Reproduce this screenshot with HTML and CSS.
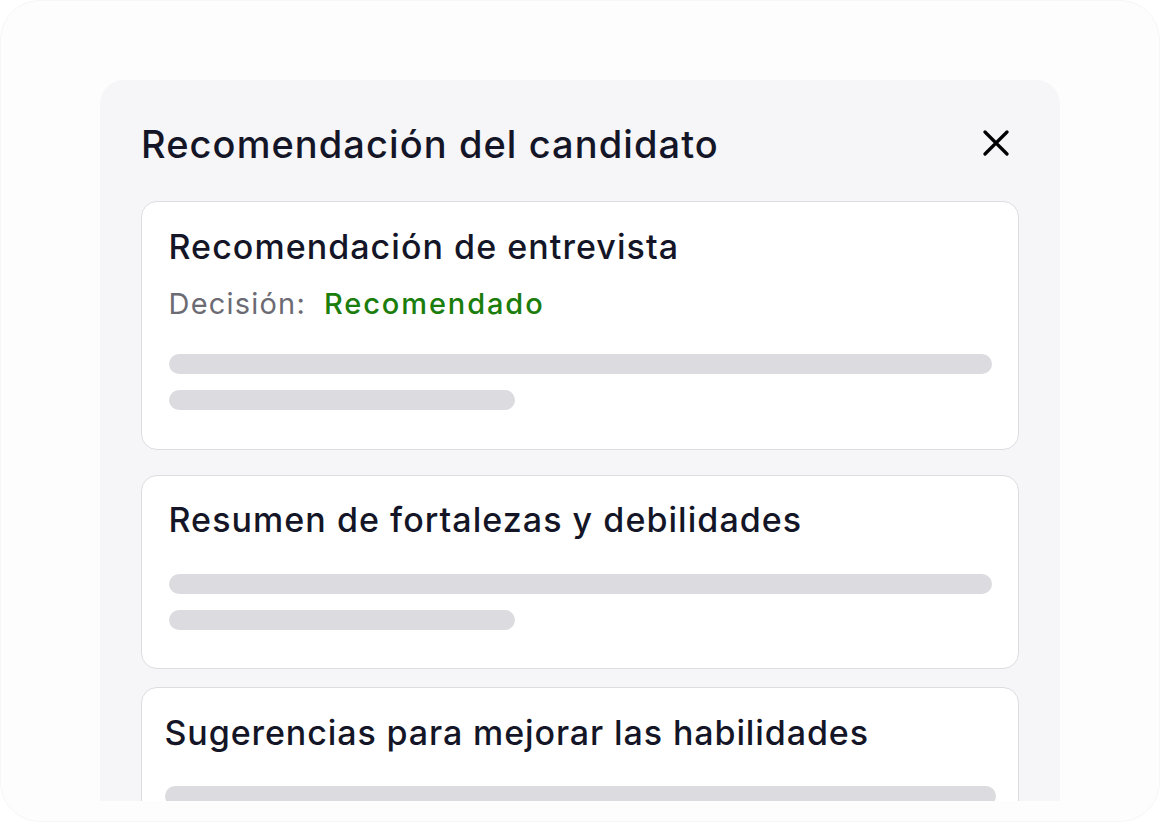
FILE: index.html
```html
<!DOCTYPE html>
<html lang="es">
<head>
<meta charset="utf-8">
<title>Recomendación del candidato</title>
<link rel="stylesheet" href="styles.css">
</head>
<body>
<div class="frame">
  <section class="panel">
    <header class="panel-header">
      <h1 class="panel-title">Recomendación del candidato</h1>
      <button class="close" aria-label="Cerrar">
        <svg width="26" height="26" viewBox="0 0 26 26" fill="none" stroke="#000" stroke-width="3.2" stroke-linecap="round">
          <path d="M2 2L24 24M24 2L2 24"/>
        </svg>
      </button>
    </header>
    <div class="cards">
      <article class="card card-first">
        <h2 class="card-title">Recomendación de entrevista</h2>
        <p class="decision"><span class="decision-label">Decisión:</span><span class="decision-value">Recomendado</span></p>
        <div class="bars">
          <div class="bar bar-full"></div>
          <div class="bar bar-short"></div>
        </div>
      </article>
      <article class="card card-second">
        <h2 class="card-title">Resumen de fortalezas y debilidades</h2>
        <div class="bars">
          <div class="bar bar-full"></div>
          <div class="bar bar-short"></div>
        </div>
      </article>
      <article class="card card-third">
        <h2 class="card-title">Sugerencias para mejorar las habilidades</h2>
        <div class="bars">
          <div class="bar bar-full"></div>
          <div class="bar bar-short"></div>
        </div>
      </article>
    </div>
  </section>
</div>
</body>
</html>
```

FILE: styles.css
```css
* { box-sizing: border-box; }
html, body {
  margin: 0;
  padding: 0;
  background: #ffffff;
  font-family: Inter, "Noto Sans", sans-serif;
}
.frame {
  width: 1160px;
  height: 822px;
  border: 1px solid #f6f6f8;
  border-radius: 40px;
  padding: 79px 99px 0 99px;
  overflow: hidden;
  background: #fdfdfe;
}
.panel {
  width: 960px;
  height: 721px;
  background: #f6f5f8;
  border-radius: 24px 24px 0 0;
  padding: 45px 41px 0 41px;
  overflow: hidden;
}
.panel-header {
  display: flex;
  align-items: flex-start;
  justify-content: space-between;
}
.panel-title {
  margin: 0;
  font-size: 38px;
  line-height: 38px;
  font-weight: 500;
  color: #141627;
  letter-spacing: 1.08px;
  white-space: nowrap;
}
.close {
  border: 0;
  background: transparent;
  padding: 0;
  margin: 5px 10px 0 0;
  width: 26px;
  height: 26px;
  display: block;
  flex: none;
}
.close svg { display: block; }
.cards {
  margin-top: 38px;
  display: flex;
  flex-direction: column;
}
.card {
  background: #ffffff;
  border: 1.5px solid #dddce1;
  border-radius: 16px;
  padding: 27.5px 26.5px 38px 26.5px;
}
.card-first { padding-bottom: 39px; }
.card-second { margin-top: 25px; }
.card-third { margin-top: 18px; padding-left: 22.5px; padding-right: 22.5px; }
.card-title {
  margin: 0;
  font-size: 34px;
  line-height: 34px;
  font-weight: 500;
  color: #141627;
  letter-spacing: 1.05px;
  white-space: nowrap;
}
.card-third .card-title { letter-spacing: 0.9px; }
.decision {
  margin: 25px 0 0 0;
  font-size: 29px;
  line-height: 29px;
  display: flex;
  gap: 18px;
  letter-spacing: 1.2px;
}
.decision-label { color: #6c6b73; }
.decision-value { color: #1b7d0c; font-weight: 500; letter-spacing: 1.9px; }
.bars {
  margin-top: 37px;
  display: flex;
  flex-direction: column;
  gap: 16px;
}
.card-first .bars { margin-top: 36px; }
.card-third .bars { margin-top: 36px; }
.bar {
  height: 20px;
  border-radius: 10px;
  background: #dcdbe0;
}
.bar-short { width: 346px; }
```
